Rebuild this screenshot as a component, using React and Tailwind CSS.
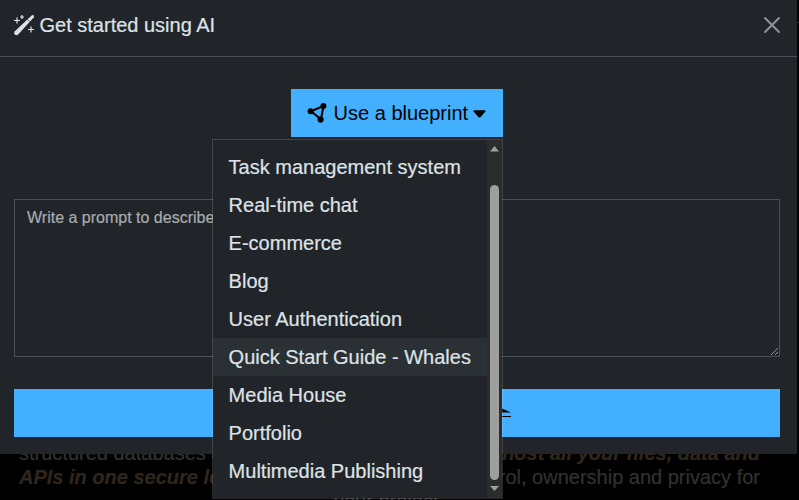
import React from "react";

const blueprints = [
  "Task management system",
  "Real-time chat",
  "E-commerce",
  "Blog",
  "User Authentication",
  "Quick Start Guide - Whales",
  "Media House",
  "Portfolio",
  "Multimedia Publishing",
];

function WandIcon() {
  return (
    <svg className="h-[22px] w-[22px] shrink-0" viewBox="0 0 22 22" fill="#dee2e6">
      <path d="M18.6 1.4Q20 .8 20.8 1.5 21.4 2.4 20.7 3.6L5.4 20.2Q3.6 21.8 2 20.8 .4 19.4 1.6 17.4Z" />
      <path d="M14.6 5.4 16.8 7.6" stroke="#212529" strokeWidth=".7" />
      <path d="M4 3.5v6M1 6.5h6M9 1v4M7 3h4M18 12.5v6M15 15.5h6" fill="none" stroke="#dee2e6" strokeWidth="1.2" />
    </svg>
  );
}

function NodesIcon() {
  return (
    <svg className="h-5 w-5 shrink-0" viewBox="0 0 20 20">
      <path d="M4 8.2 16.5 3 14 16.2Z" fill="none" stroke="#000" strokeWidth="2.1" />
      <circle cx="3.6" cy="8.2" r="3" />
      <circle cx="16.4" cy="3.1" r="3" />
      <circle cx="13.6" cy="16.6" r="3.1" />
    </svg>
  );
}

function BlueprintMenu() {
  return (
    <div className="absolute top-[50px] right-0 flex h-[360px] w-[291px] border border-white/15 bg-[#212529] bg-clip-padding">
      <ul className="min-w-0 flex-1 pt-2">
        {blueprints.map((name) => (
          <li
            key={name}
            className={
              "h-[38px] pl-[15.6px] text-[20px] leading-[38px] whitespace-nowrap " +
              (name === "Quick Start Guide - Whales" ? "bg-[#2b3035]" : "")
            }
          >
            {name}
          </li>
        ))}
      </ul>
      <div className="flex w-[15px] flex-col items-center bg-[#2c2c2c]">
        <svg className="h-[45px] w-[15px]" viewBox="0 0 15 45">
          <path d="M3 11.5 7.5 6 12 11.5Z" fill="#9f9f9f" />
        </svg>
        <div className="h-[295px] w-[9px] rounded-full bg-[#9f9f9f]" />
        <svg className="h-[18px] w-[15px]" viewBox="0 0 15 18">
          <path d="M3 6 7.5 11 12 6Z" fill="#9f9f9f" />
        </svg>
      </div>
    </div>
  );
}

export default function App() {
  return (
    <div className="relative h-[500px] w-[799px] overflow-hidden bg-black font-['Liberation_Sans',Arial,sans-serif] text-[20px] text-[#dee2e6] [-webkit-text-stroke:0.2px]">
      <div className="flex h-[500px] flex-col justify-end overflow-hidden text-[#323232]">
        <div className="-mb-[13px] h-[72px] leading-6 whitespace-nowrap">
          <div className="flex justify-between pr-[39px] pl-[19px]">
            <span>structured databases and</span>
            <b className="text-[#30271c] italic">host all your files, data and</b>
          </div>
          <div className="flex justify-between pr-[39px] pl-[19px]">
            <b className="text-[#30271c] italic">APIs in one secure loc</b>
            <span>control, ownership and privacy for</span>
          </div>
          <div className="pl-[334px]">your project</div>
        </div>
      </div>
      <div className="absolute top-[22px] right-0 h-px w-[2px] bg-[#12303c]" />

      <div className="absolute top-0 left-0 flex h-[454px] w-[797px] flex-col bg-[#212529]">
        <header className="flex h-[57px] shrink-0 items-center justify-between border-b border-[#495057] pr-4 pb-[7px] pl-[13px]">
          <div className="flex items-center gap-[4.5px]">
            <WandIcon />
            <h1 className="text-[20px] leading-[30px]">Get started using AI</h1>
          </div>
          <svg className="h-[18px] w-[18px]" viewBox="0 0 18 18" fill="none" stroke="#909294" strokeWidth="2" strokeLinecap="round">
            <path d="M2 2 16 16M16 2 2 16" />
          </svg>
        </header>

        <main className="flex flex-col pt-8 pr-[17px] pl-[14px]">
          <div className="relative z-10 ml-[277px] w-[212px]">
            <button className="flex h-12 w-[212px] items-center bg-[#42b0ff] pl-4 text-black [-webkit-text-stroke:0px]">
              <NodesIcon />
              <span className="ml-[6.6px] whitespace-nowrap">Use a blueprint</span>
              <svg className="mt-[2px] ml-[5px] h-[8px] w-[13px] shrink-0" viewBox="0 0 13 8">
                <path d="M1.2.2H11.8Q13 .5 12.4 1.6L7.4 7.2Q6.5 7.9 5.6 7.2L.6 1.6Q0 .5 1.2.2Z" />
              </svg>
            </button>
            <BlueprintMenu />
          </div>

          <div className="relative mt-[62px] h-[158px] border border-[#495057] px-3 py-[6px] text-[16px] leading-6 text-[#a7abaf]">
            Write a prompt to describe
            <svg className="absolute right-0 bottom-0 h-[9px] w-[9px]" viewBox="0 0 9 9">
              <path d="M1 8 8 1M5 8 8 5" stroke="#c8c8c8" strokeWidth="1" strokeDasharray="1 .5" />
            </svg>
          </div>

          <button className="mt-8 flex h-12 items-center bg-[#42b0ff] pl-[482px]">
            <svg className="h-[20px] w-[16px]" viewBox="0 0 16 20">
              <path d="M0 3 15 9.5H0Z" />
              <path d="M0 13.5H15" stroke="#000" strokeWidth="1" />
            </svg>
          </button>
        </main>
      </div>
    </div>
  );
}
